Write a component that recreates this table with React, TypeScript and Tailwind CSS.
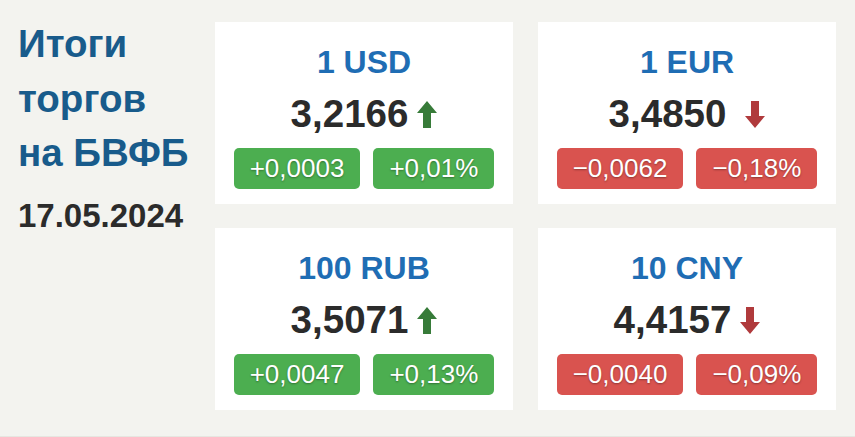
type Rate = {
  title: string;
  value: string;
  up: boolean;
  diff: string;
  pct: string;
  wide?: boolean;
};

const rates: Rate[] = [
  { title: '1 USD', value: '3,2166', up: true, diff: '+0,0003', pct: '+0,01%' },
  { title: '1 EUR', value: '3,4850', up: false, diff: '−0,0062', pct: '−0,18%', wide: true },
  { title: '100 RUB', value: '3,5071', up: true, diff: '+0,0047', pct: '+0,13%' },
  { title: '10 CNY', value: '4,4157', up: false, diff: '−0,0040', pct: '−0,09%' },
];

function Arrow({ up }: { up: boolean }) {
  return (
    <svg width="20" height="27" viewBox="0 0 20 27" className={up ? 'text-[#377b39]' : 'text-[#b03a3c]'}>
      {up ? (
        <path d="M10 0 L20 12 L14 12 L14 27 L6 27 L6 12 L0 12 Z" fill="currentColor" />
      ) : (
        <path d="M6 0 L14 0 L14 15 L20 15 L10 27 L0 15 L6 15 Z" fill="currentColor" />
      )}
    </svg>
  );
}

function RateCard({ rate }: { rate: Rate }) {
  const badge = rate.up ? 'bg-[#4cae50]' : 'bg-[#d9534f]';
  return (
    <div className="bg-white flex flex-col items-center pt-5 pb-[15px]">
      <div className="text-[32px] leading-[40px] font-bold text-[#1f6db4]">{rate.title}</div>
      <div className={`flex items-center mt-[10px] ${rate.wide ? 'gap-[19px]' : 'gap-[9px]'}`}>
        <span className="text-[38.5px] leading-[44px] font-bold text-[#2b2b2b]">{rate.value}</span>
        <Arrow up={rate.up} />
      </div>
      <div className="flex gap-[13px] mt-3">
        <span className={`${badge} rounded-[5px] px-4 text-[26px] leading-[41px] text-white [text-shadow:0_1px_2px_rgba(0,0,0,0.35)]`}>
          {rate.diff}
        </span>
        <span className={`${badge} rounded-[5px] px-4 text-[26px] leading-[41px] text-white [text-shadow:0_1px_2px_rgba(0,0,0,0.35)]`}>
          {rate.pct}
        </span>
      </div>
    </div>
  );
}

export default function App() {
  return (
    <div className="w-[855px] h-[437px] bg-[#f3f3ef] font-['Liberation_Sans',Arial,sans-serif] flex pl-[18px] pr-[18px] pt-[22px] border-b border-[#e6e6e0]">
      <div className="w-[197px] shrink-0 -mt-[5px]">
        <h1 className="text-[38.5px] leading-[54.5px] font-bold text-[#185b8b]">
          Итоги
          <br />
          торгов
          <br />
          на БВФБ
        </h1>
        <div className="text-[33px] leading-[40px] font-bold text-[#2b2b2b] mt-[15px]">17.05.2024</div>
      </div>
      <div className="grid grid-cols-[298px_298px] gap-x-[25px] gap-y-6 content-start">
        {rates.map((r) => (
          <RateCard key={r.title} rate={r} />
        ))}
      </div>
    </div>
  );
}
